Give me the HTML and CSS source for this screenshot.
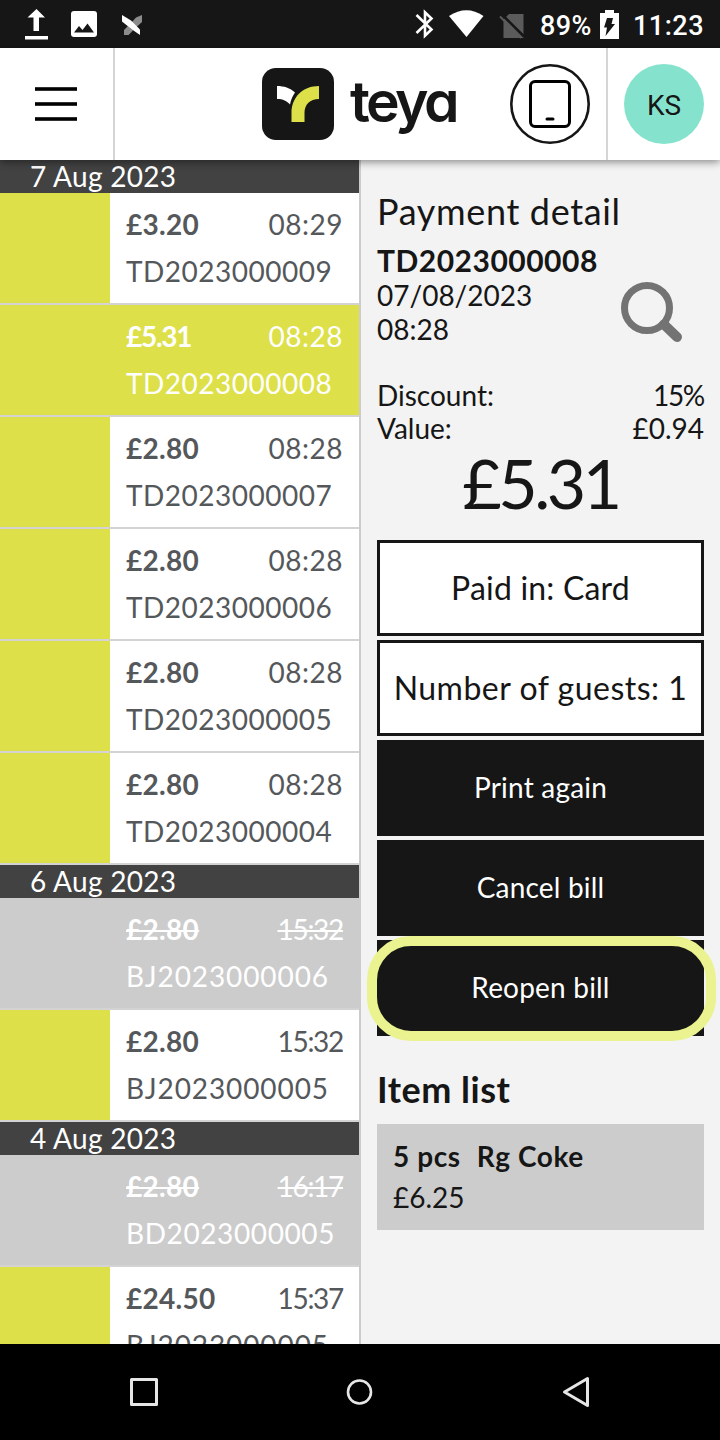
FILE: index.html
```html
<!DOCTYPE html>
<html lang="en">
  <head>
    <meta charset="UTF-8" />
    <meta name="viewport" content="width=device-width, initial-scale=1.0" />
    <title>Payments</title>
    <link rel="stylesheet" href="styles.css">
  </head>
  <body>
    <div class="statusbar">
      <svg class="notifications" width="160" height="48" viewBox="0 0 160 48">
        <path d="M36.500 9l8.500 8.500h-6v13.500h-5.500V17.500h-6zM25 36h23v3.500H25z" fill="#fff" />
        <rect x="71" y="11" width="26" height="26" rx="3" fill="#fff" />
        <path d="M74 32.500l5-6.500 3.500 4 5-6.500 6.500 9z" fill="#161616" />
        <path d="M142 15v7l-6 5.500-5-4.500 5-5.500zM124 35v-5l4-4 5 4.500-4.500 4.500z" fill="#8c8c8c" />
        <path d="M122 15l9 5.500 9 9V35l-8-5.500-10-8z" fill="#fff" />
      </svg>
      <div class="system">
        <svg width="114" height="48" viewBox="0 0 114 48">
          <path d="M4.500 15L19.500 29.500 13 35.800V12.200L19.500 18.500 4.500 33" fill="none" stroke="#fff" stroke-width="2.600" />
          <path d="M37 16q17.500-11.500 34.500 0L54.500 37z" fill="#fff" />
          <path d="M97 14h14.500v24h-20V19.500z" fill="#5b5b5b" />
          <path d="M90 14.500L112 36.500" stroke="#161616" stroke-width="2.600" />
          <path d="M88 16.500L109.500 38" stroke="#5b5b5b" stroke-width="2" />
        </svg>
        <span class="battery-level">89%</span>
        <svg class="battery" width="19" height="30" viewBox="0 0 19 30">
          <path d="M0 3h5V0h9v3h5v26H0z" fill="#fff" />
          <path d="M7 8h6l-1.500 6H15L5.500 26l1.500-8.500H4z" fill="#161616" />
        </svg>
        <span class="clock">11:23</span>
      </div>
    </div>

    <header class="header">
      <button class="menu" aria-label="Menu"><span></span><span></span><span></span></button>
      <div class="brand">
        <svg class="logo" width="72" height="72" viewBox="0 0 72 72">
          <rect width="72" height="72" rx="14" fill="#161616" />
          <path d="M15 18c7 0 13 2 18 6.500-2.500 3.500-4 7-5 12C25 33 21 31 15 31z" fill="#fff" />
          <path d="M57 18v13c-9 0-14.500 5.500-14.500 14v9h-13v-9C29.500 29 41 18 57 18z" fill="#dde048" />
        </svg>
        <span class="wordmark">teya</span>
        <div class="device">
          <svg width="80" height="80" viewBox="0 0 80 80" fill="none">
            <circle cx="40" cy="40" r="38.700" stroke="#161616" stroke-width="2.600" />
            <rect x="20.500" y="17.500" width="39" height="45" rx="4.500" stroke="#000" stroke-width="3" />
            <path d="M37 55h6" stroke="#000" stroke-width="3" stroke-linecap="round" />
          </svg>
        </div>
      </div>
      <div class="account"><div class="avatar">KS</div></div>
    </header>

    <main class="content">
      <div class="payments" id="payments"></div>

      <section class="detail">
        <h1>Payment detail</h1>
        <div class="bill">
          <div>
            <div class="bill-id">TD2023000008</div>
            <div class="bill-date">07/08/2023</div>
            <div class="bill-date">08:28</div>
          </div>
          <svg class="search" width="64" height="64" viewBox="0 0 64 64" fill="none" stroke="#737373">
            <circle cx="27" cy="27" r="22.500" stroke-width="7" />
            <path d="M44 43.500l13 12.500" stroke-width="10" stroke-linecap="round" />
          </svg>
        </div>
        <div class="line"><span>Discount:</span><span class="narrow">15%</span></div>
        <div class="line"><span>Value:</span><span>£0.94</span></div>
        <div class="total">£5.31</div>

        <div class="actions">
          <button class="action outline">Paid in: Card</button>
          <button class="action outline guests">Number of guests: 1</button>
          <button class="action">Print again</button>
          <button class="action">Cancel bill</button>
          <button class="action highlighted">Reopen bill</button>
        </div>

        <h2>Item list</h2>
        <div class="item">
          <div class="item-name"><span>5 pcs</span><span>Rg Coke</span></div>
          <div class="item-price">£6.25</div>
        </div>
      </section>
    </main>

    <nav class="navbar">
      <svg width="720" height="96" viewBox="0 0 720 96" fill="none" stroke="#e6e6e6" stroke-width="3" stroke-linejoin="round">
        <rect x="131.500" y="35.500" width="25" height="25" />
        <circle cx="359.500" cy="48" r="11.500" stroke-width="2.600" />
        <path d="M587.500 34.500v27L564.500 48z" />
      </svg>
    </nav>

    <script>
      const days = [
        {
          date: "7 Aug 2023",
          rows: [
            ["£3.20", "08:29", "TD2023000009"],
            ["£5.31", "08:28", "TD2023000008", "selected"],
            ["£2.80", "08:28", "TD2023000007"],
            ["£2.80", "08:28", "TD2023000006"],
            ["£2.80", "08:28", "TD2023000005"],
            ["£2.80", "08:28", "TD2023000004"],
          ],
        },
        {
          date: "6 Aug 2023",
          rows: [
            ["£2.80", "15:32", "BJ2023000006", "cancelled"],
            ["£2.80", "15:32", "BJ2023000005"],
          ],
        },
        {
          date: "4 Aug 2023",
          rows: [
            ["£2.80", "16:17", "BD2023000005", "cancelled"],
            ["£24.50", "15:37", "BJ2023000005"],
          ],
        },
      ];

      // Values with a "1" are set tighter
      const spacing = (text) => (text.includes("1") ? "narrow" : "");

      const list = document.getElementById("payments");
      days.forEach((day) => {
        let html = `<div class="day">${day.date}</div>`;
        day.rows.forEach(([amount, time, id, state]) => {
          html += `
            <div class="payment ${state || ""}">
              <div class="swatch"></div>
              <div class="info">
                <div class="top">
                  <span class="amount ${spacing(amount)}">${amount}</span>
                  <span class="time ${spacing(time)}">${time}</span>
                </div>
                <div class="id ${id.slice(0, 2).toLowerCase()}">${id}</div>
              </div>
            </div>`;
        });
        list.insertAdjacentHTML("beforeend", html);
      });
    </script>
  </body>
</html>
```
FILE: styles.css
```css
*,
*::after {
  box-sizing: border-box;
}
body {
  margin: 0;
  height: 1440px;
  display: flex;
  flex-direction: column;
  overflow: hidden;
  font-family: Lato, sans-serif;
  font-size: 28px;
  color: #161616;
  background: #f3f3f3;
}
svg {
  display: block;
}
button {
  font: inherit;
  border: none;
  padding: 0;
}

.statusbar {
  flex: none;
  height: 48px;
  display: flex;
  justify-content: space-between;
  background: #161616;
  color: #fff;
  font: 500 27px Roboto, sans-serif;
}
.system {
  display: flex;
  align-items: center;
  padding: 3px 16px 0 0;
}
.system svg:first-child {
  margin-top: -3px;
  margin-right: 14px;
}
.battery-level {
  letter-spacing: 0.5px;
}
.battery {
  margin: -2px 14px 0 8px;
}
.clock {
  letter-spacing: 0.5px;
}

.header {
  flex: none;
  height: 112px;
  display: flex;
  position: relative;
  background: #fff;
  box-shadow: 0 2px 8px rgba(0, 0, 0, 0.45);
}
.menu {
  width: 115px;
  padding-left: 35px;
  display: flex;
  flex-direction: column;
  justify-content: center;
  gap: 11px;
  background: #fff;
  border-right: 2px solid #d5d5d5;
}
.menu span {
  width: 42px;
  height: 4px;
  background: #000;
  border: solid #333;
  border-width: 1px 0;
}
.brand {
  flex: 1;
  display: flex;
  align-items: center;
  justify-content: flex-end;
  padding-right: 16px;
}
.wordmark {
  width: 108px;
  margin: -5px 52px 0 16px;
  font: 600 57px/60px Inter, sans-serif;
  font-feature-settings: "cv11";
  letter-spacing: -3.6px;
  white-space: nowrap;
}
.account {
  width: 114px;
  padding: 16px;
  border-left: 2px solid #d5d5d5;
}
.avatar {
  width: 80px;
  height: 80px;
  border-radius: 50%;
  background: #85e3cd;
  font: 28px/83px Roboto, sans-serif;
  text-align: center;
}

.content {
  flex: 1;
  min-height: 0;
  display: flex;
}
.payments {
  width: 361px;
  overflow: hidden;
  border-right: 2px solid #ccc;
}
.day {
  height: 33px;
  padding-left: 30px;
  line-height: 33px;
  letter-spacing: 0.3px;
  background: #424242;
  color: #fff;
}
.payment {
  height: 112px;
  display: flex;
  border-bottom: 2px solid #d3d3d3;
  background: #fff;
  color: #55585b;
}
.swatch {
  width: 110px;
  background: #dde048;
}
.info {
  flex: 1;
  padding: 8px 16px;
  line-height: 47px;
}
.top {
  display: flex;
  justify-content: space-between;
}
.amount {
  font-weight: bold;
  letter-spacing: 0.3px;
}
.time {
  letter-spacing: 0.5px;
}
.narrow {
  letter-spacing: -1.3px;
}
.td {
  letter-spacing: 0.5px;
}
.bd {
  letter-spacing: 0.6px;
}
.bj {
  letter-spacing: 0.9px;
}
.selected {
  background: #dde048;
  color: #fff;
}
.cancelled {
  background: #ccc;
  color: #fff;
}
.cancelled .swatch {
  background: #ccc;
}
.cancelled .top span {
  text-decoration: line-through;
  text-decoration-thickness: 2px;
}

.detail {
  flex: 1;
  padding: 29px 16px 0;
}
h1 {
  margin: 0;
  font-size: 36px;
  font-weight: normal;
  line-height: 44px;
  letter-spacing: 0.65px;
}
.bill {
  display: flex;
  justify-content: space-between;
  padding-top: 10px;
}
.bill-id {
  font-size: 30px;
  font-weight: bold;
  line-height: 35px;
  letter-spacing: 0.5px;
}
.bill-date {
  line-height: 34px;
}
.search {
  margin: 38px 20px 0 0;
}
.bill + .line {
  margin-top: 33px;
}
.line {
  display: flex;
  justify-content: space-between;
  line-height: 33px;
}
.total {
  height: 95px;
  font-size: 68px;
  line-height: 76px;
  letter-spacing: -3.5px;
  text-align: center;
}
.actions {
  display: flex;
  flex-direction: column;
  gap: 4px;
}
.action {
  height: 96px;
  position: relative;
  padding-bottom: 2px;
  background: #161616;
  color: #fff;
  letter-spacing: 0.2px;
}
.outline {
  background: #fff;
  color: #161616;
  border: 3px solid #161616;
  font-size: 32px;
}
.guests {
  letter-spacing: 0.5px;
}
.highlighted::after {
  content: "";
  position: absolute;
  top: -4px;
  left: -10px;
  width: 349px;
  height: 105px;
  border: 10px solid #eaf38f;
  border-radius: 44px;
}
h2 {
  margin: 31px 0 13px;
  font-size: 36px;
  font-weight: bold;
  line-height: 44px;
  letter-spacing: 0.5px;
}
.item {
  height: 106px;
  padding: 12px 16px;
  line-height: 41px;
  background: #ccc;
}
.item-name {
  display: flex;
  gap: 16px;
  font-weight: bold;
  letter-spacing: 0.6px;
}

.navbar {
  flex: none;
  height: 96px;
  background: #000;
}
```
